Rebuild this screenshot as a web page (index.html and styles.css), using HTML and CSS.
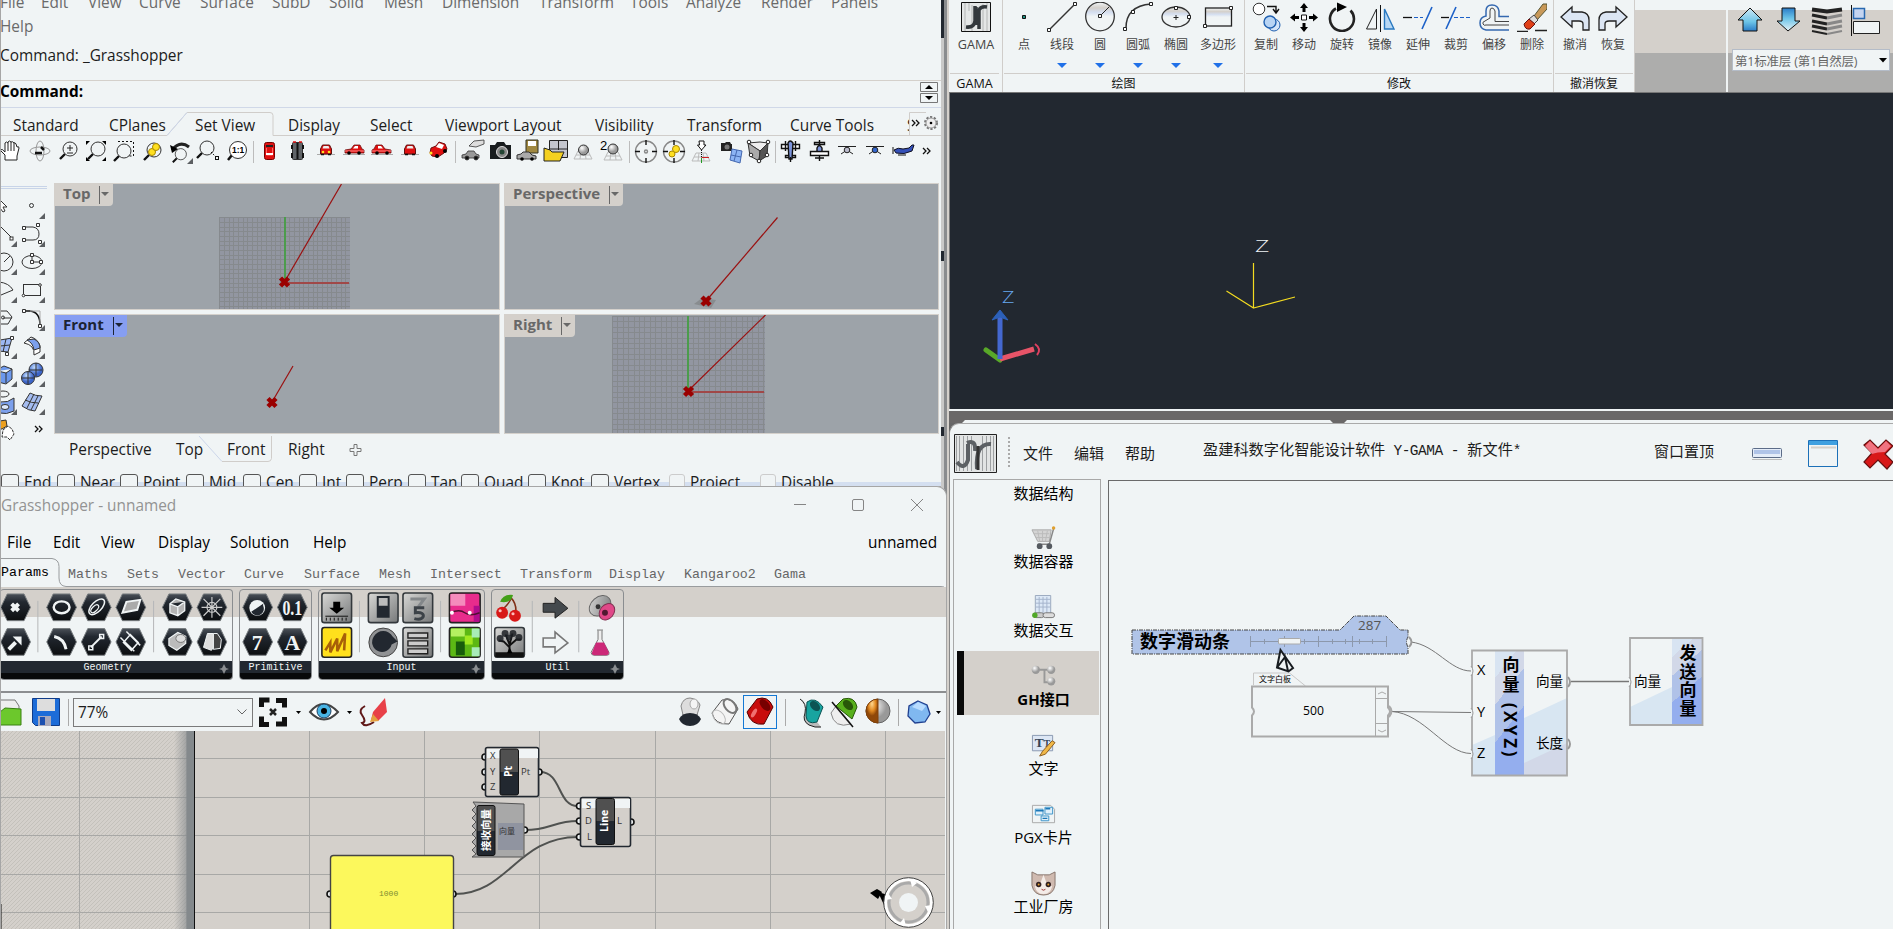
FILE: index.html
```html
<!DOCTYPE html>
<html lang="zh-CN">
<head>
<meta charset="utf-8">
<title>Rhino, Grasshopper and Y-GAMA</title>
<link rel="stylesheet" href="styles.css">
</head>
<body>
<svg width="0" height="0" class="defs">
  <defs>
    <linearGradient id="dark" x2="0" y2="1"><stop offset="0" stop-color="#4a5058"/><stop offset=".3" stop-color="#222830"/><stop offset="1" stop-color="#0c0e10"/></linearGradient>
    <linearGradient id="metal" x2="1" y2="1"><stop offset="0" stop-color="#d8d8d6"/><stop offset="1" stop-color="#77797a"/></linearGradient>
    <linearGradient id="cap" x2="0" y2="1"><stop offset=".5" stop-color="#505050"/><stop offset=".5" stop-color="#222830"/></linearGradient>
    <linearGradient id="sky" x2="0" y2="1"><stop offset="0" stop-color="#f0f4f5"/><stop offset=".2" stop-color="#d4d0cb"/><stop offset=".35" stop-color="#d4def0"/><stop offset=".5" stop-color="#f0f4f5"/></linearGradient>
    <linearGradient id="up" x2="0" y2="1"><stop offset="0" stop-color="#d0e8f4"/><stop offset=".6" stop-color="#6cc4e8"/><stop offset="1" stop-color="#2a7cc8"/></linearGradient>
    <linearGradient id="down" x2="0" y2="1"><stop offset="0" stop-color="#2a7cc8"/><stop offset=".45" stop-color="#6cc4e8"/><stop offset="1" stop-color="#e4f0f6"/></linearGradient>
    <radialGradient id="ball" cx=".35" cy=".3"><stop offset="0" stop-color="#fff"/><stop offset="1" stop-color="#999"/></radialGradient>
    <radialGradient id="blueball" cx=".4" cy=".3"><stop offset="0" stop-color="#c0dcff"/><stop offset="1" stop-color="#3c64c8"/></radialGradient>
    <radialGradient id="amber" cx=".5" cy=".2"><stop offset="0" stop-color="#ffd890"/><stop offset=".6" stop-color="#e08820"/><stop offset="1" stop-color="#904808"/></radialGradient>
    <pattern id="gridTop" x="219" y="217" width="14" height="14" patternUnits="userSpaceOnUse"><rect width="14" height="14" fill="#9296a1"/><path d="M0 .5h14M0 5.500h14M0 10.500h14M.5 0v14M5.500 0v14M10.500 0v14" stroke="#868a8e"/></pattern>
    <pattern id="gridRight" x="612" y="316" width="27" height="27" patternUnits="userSpaceOnUse"><rect width="27" height="27" fill="#9296a1"/><path d="M0 .5h27M0 5.500h27M0 11.500h27M0 16.500h27M0 22.500h27M.5 0v27M5.500 0v27M11.500 0v27M16.500 0v27M22.500 0v27" stroke="#868a8e"/></pattern>
    <pattern id="hatch" width="4" height="4" patternUnits="userSpaceOnUse"><path d="M-1 1l2-2M0 4L4 0M3 5l2-2" stroke="#c4c1bb" stroke-width="1"/></pattern>
    <linearGradient id="edge"><stop offset="0" stop-color="#84898c" stop-opacity="0"/><stop offset=".6" stop-color="#84898c" stop-opacity=".6"/><stop offset=".64" stop-color="#84898c"/><stop offset="1" stop-color="#84898c"/></linearGradient>
    <path id="x" d="M-4-4L4 4M4-4L-4 4" stroke="#9a0000" stroke-width="4.500"/>
    <path id="hex" d="M-15 0L-8.500-13.500H8.500L15 0L8.500 13.500H-8.500Z" fill="url(#dark)" stroke="#777c80"/>
    <rect id="sq" x="-15" y="-15" width="30" height="30" rx="2.500" fill="url(#metal)" stroke="#33383c" stroke-width="1.600"/>
    <path id="corner" d="M6 0V6H0Z" fill="#5c5f62"/>
    <g id="lens" fill="#f0f4f5" stroke="#333"><path d="M-4 4L-9 9" stroke="#111" stroke-width="2.400"/><circle cx="1" cy="-1" r="7"/></g>
    <g id="car"><path d="M-11 4.500H11" stroke="#aaa"/><path d="M-9 3V0l6-1 3-4h6l2 4 2 1V3Z" fill="#e01010" stroke="#701010" stroke-width=".8"/><path d="M-1-1.500l2-2.500h3v2.500Z" fill="#fff"/><path d="M-9 1h19" stroke="#f88"/><circle cx="-5" cy="3" r="1.800"/><circle cx="5" cy="3" r="1.800"/></g>
    <g id="carfront"><path d="M-9 4.500H9" stroke="#aaa"/><path d="M-5.500 4v-5l2-4h7l2 4v5Z" fill="#e01010" stroke="#601010"/><path d="M-3.500-1.500l1-2.500h5l1 2.500Z" fill="#eee"/><path d="M-5 4.500h3M2 4.500h3" stroke="#111" stroke-width="1.500"/></g>
    <g id="net"><path d="M-9 8L-5 0H5L9 8ZM-7 4H7M-3 8L-2 0M3 8L2 0" fill="none" stroke="#bbb"/></g>
    <path id="caret" d="M0 0h5L2.500 3Z"/>
    <path id="plusmark" d="M0-5L2-1 5 0 2 1 0 5-2 1-5 0-2-1Z" fill="#8a8d90"/>
    <circle id="port" r="3" fill="#f0f4f5" stroke="#111" stroke-width="1.600"/>
  </defs>
</svg>

<main class="desktop">

<svg class="behind" viewBox="941 0 952 929"><path d="M941 0h3v38h-3ZM941 251h3v10h-3ZM941 427h3v9h-3Z" fill="#222830"/><path d="M949 411h944v9H949Z" fill="#6a6868"/><path d="M949 420h944v3H949Z" fill="#f0f4f5"/><path d="M949 420h16l-3 3h-13ZM1330 420h17l-3 3h-11Z" fill="#6a6868"/></svg>

<section class="window rhino">
  <nav class="rhino-menu"><span>File</span><span>Edit</span><span>View</span><span>Curve</span><span>Surface</span><span>SubD</span><span>Solid</span><span>Mesh</span><span>Dimension</span><span>Transform</span><span>Tools</span><span>Analyze</span><span>Render</span><span>Panels</span></nav>
  <div class="rhino-help">Help</div>
  <div class="history">Command: _Grasshopper</div>
  <div class="prompt"><b>Command:</b><svg class="spin" viewBox="0 0 18 22"><path d="M.5.500h17v9H.5zM.5 11.500h17v9H.5z" fill="none" stroke="#777"/><path d="M5 7h8L9 3ZM5 14h8L9 18Z"/></svg></div>
  <div class="rhino-tabs">
    <svg class="tab-shape" viewBox="0 108 941 28"><path d="M0 135.500H167L187 112.500H270q3 0 3 3V135.500H941M909.500 135V112.500H926" fill="none" stroke="#d0cdca"/><path d="M167 135.500L187 112.500" stroke="#ccd6ea"/></svg>
    <span>Standard</span><span>CPlanes</span><span>Set View</span><span>Display</span><span>Select</span><span>Viewport Layout</span><span>Visibility</span><span>Transform</span><span>Curve Tools</span><span class="cut">S</span>
    <svg class="more" viewBox="0 0 30 24"><path d="M3 9l3 3-3 3M7 9l3 3-3 3" fill="none" stroke="#111" stroke-width="1.300"/><circle cx="22" cy="12" r="6" fill="none" stroke="#777" stroke-width="2" stroke-dasharray="2.200 1.600"/><circle cx="22" cy="12" r="5" fill="#eee" stroke="#999"/><circle cx="22" cy="12" r="1.300"/></svg>
  </div>
  <svg class="rhino-icons" viewBox="0 136 941 47">
    <path d="M5 160V155L0 150q2-2 5 2V143q1.500-2 3 0v-1q1.500-2 3 0 1.500-1 3 1 1-1 2 1l1 3q2-1 2 1l-2 8v4Z" fill="#fff" stroke="#222"/><path d="M8 143v8M11 142v9M14 143v8" stroke="#222"/>
    <g fill="none" stroke="#999"><ellipse cx="40" cy="151" rx="10" ry="4"/><ellipse cx="40" cy="151" rx="4" ry="10"/><path d="M35 153h7M41 147l3 3" stroke="#111" stroke-width="2.500"/></g>
    <use href="#lens" x="69" y="150"/><path d="M67 148h6M70 145v6M67 153h6" stroke="#222"/>
    <use href="#lens" x="97" y="150"/><path d="M86 141h4l-4 4ZM106 141h-4l4 4ZM86 161h4l-4-4ZM106 161h-4l4-4Z"/>
    <use href="#lens" x="123" y="152"/><path d="M118 141.500H133.500V156H128" fill="none" stroke="#111" stroke-dasharray="2 2"/>
    <use href="#lens" x="153" y="151"/><circle cx="152" cy="152" r="3.500" fill="#ffe020" stroke="#a80"/><circle cx="156" cy="147" r="3.500" fill="#ffe020" stroke="#a80"/>
    <use href="#lens" x="180" y="155" transform="translate(36 31) scale(.8)"/><path d="M172 150q8-10 17-3" fill="none" stroke="#222" stroke-width="3"/><path d="M170 145l2 8 6-4Z"/><use href="#corner" x="187" y="158"/>
    <use href="#lens" x="206" y="149"/><path d="M211 152l4 4" stroke="#111" stroke-dasharray="1.500 1.500"/><rect x="215.500" y="156.500" width="3" height="3" fill="none" stroke="#111"/>
    <g transform="translate(236 151)"><path d="M-4 4L-8 9" stroke="#111" stroke-width="2.500"/><circle cx="2" cy="-1" r="8.500" fill="#fff" stroke="#333"/><text x="-4" y="2" class="tiny">1:1</text></g>
    <path d="M253.500 141v22M455.500 141v22M629.500 141v22M775.500 141v22" stroke="#bcbcbc"/>
    <rect x="264.500" y="142.500" width="10" height="17" rx="2" fill="#e01010" stroke="#700"/><rect x="266" y="145" width="7" height="2" fill="#222"/><path d="M266.500 148v7h6v-7" fill="none" stroke="#f66"/><rect x="266" y="153" width="7" height="2" fill="#fff"/>
    <rect x="292.500" y="142.500" width="10" height="17" rx="1" fill="#606468" stroke="#333"/><path d="M297.500 143v16M292 145v4M303 145v4M292 153v5M303 153v5" stroke="#111" stroke-width="2"/><path d="M293 142h3M299 142h3" stroke="#e01010" stroke-width="1.500"/>
    <use href="#carfront" x="326" y="150"/><circle cx="323" cy="152" r="1.300" fill="#ffe020"/><circle cx="329" cy="152" r="1.300" fill="#ffe020"/><use href="#car" x="354" y="150"/><use href="#car" transform="translate(382 150) scale(-1 1)"/><use href="#carfront" x="410" y="150"/>
    <path d="M430 153l1-5 5-2 3-4 6 2 2 5-3 4-6 4-6-1Z" fill="#e01010" stroke="#701010"/><path d="M436 147l3-4 5 2-2 4Z" fill="#fff"/><circle cx="437" cy="156" r="2"/><circle cx="445" cy="151" r="2"/><circle cx="431" cy="153" r="1.500" fill="#ffe020"/>
    <g fill="#999" stroke="#333" stroke-width=".8"><path d="M462 158v-3l4-1 2-3h6l2 3 3 1v3Z"/><circle cx="467" cy="158" r="2" fill="#111"/><circle cx="476" cy="158" r="2" fill="#111"/><path d="M469 146l5-5 10-1v4l-8 3Z" fill="#ddd"/></g>
    <path d="M490 145h5l2-3h7l2 3h5v14h-21Z" fill="#181c1e"/><circle cx="502" cy="152" r="5.500" fill="#888" stroke="#ddd"/><circle cx="502" cy="152" r="2.500" fill="#243"/>
    <path d="M526 140h12v13h-12Z" fill="#a08840" stroke="#332"/><path d="M528 141h8v5h-8Z" fill="#fff"/><path d="M517 159v-4l4-1 2-2h6l3 3 4 1v3Z" fill="#aaa" stroke="#333"/><circle cx="522" cy="159" r="1.800"/><circle cx="532" cy="159" r="1.800"/>
    <path d="M549.500 140.500h18v17h-18ZM558.500 140v10M550 149h17" fill="#c4c6ce" stroke="#222"/><path d="M544 161V148l6 2 2 2h12l-4 9Z" fill="#f4d020" stroke="#222"/>
    <use href="#net" x="583" y="151"/><circle cx="583.500" cy="150" r="5" fill="url(#ball)" stroke="#333"/>
    <use href="#net" x="613" y="152"/><circle cx="613" cy="149" r="5" fill="url(#ball)" stroke="#333"/><text x="600" y="150" class="two">2</text>
    <g fill="none" stroke="#888" stroke-width="1.400"><circle cx="646" cy="151.500" r="10.500"/><circle cx="674" cy="151.500" r="10.500"/><path d="M646 140v5M646 158v5M635 151.500h5M652 151.500h5M674 140v5M674 158v5M663 151.500h5M680 151.500h5" stroke="#111"/><circle cx="646" cy="151.500" r="1.500"/></g><circle cx="672" cy="154" r="3" fill="#ffe020" stroke="#a80"/><circle cx="676" cy="149" r="3.500" fill="#ffe020" stroke="#a80"/>
    <use href="#net" x="701" y="153"/><path d="M699 141h5v4h2l-4.500 5-4-5h2Z" fill="#fff" stroke="#111"/><path d="M701.500 150v8" stroke="#111" stroke-dasharray="1 1"/><path d="M701.500 157.500H709" stroke="#c22"/><path d="M701.500 158v5" stroke="#292"/>
    <path d="M721 143h4l1-1h4l1 2h1v7h-11Z" fill="#222"/><circle cx="727" cy="147" r="2.500" fill="#777"/><path d="M732 149l10 2-2 12-10-3ZM737 150l-3 11M731 155l10 2" fill="#8cb4f4" stroke="#4468b0"/>
    <path d="M748 143l12-1 8 1-8 8Z" fill="#eee" stroke="#333"/><path d="M748 143l2 13 9 5 1-10Z" fill="#aaa" stroke="#333"/><path d="M760 151l8-8-1 13-8 5Z" fill="#555" stroke="#333"/><g fill="#fff" stroke="#222"><circle cx="749" cy="142" r="1.800"/><circle cx="768" cy="142" r="1.800"/><circle cx="751" cy="155" r="1.800"/><circle cx="759" cy="161" r="1.800"/><circle cx="767" cy="155" r="1.800"/></g>
    <g stroke="#111" stroke-width="1.400" fill="#fff"><path d="M781.500 144.500h18v4h-18ZM785.500 155.500h10v2h-10Z"/><path d="M788 143q2-4 5 0l-1 16h-3Z" fill="#7c94dc"/><path d="M785.500 141v10M795.500 141v10M790.500 157v5"/><path d="M814.500 142.500h10v2h-10Z"/><path d="M817 148q2-5 5 0v5h-5Z" fill="#7c94dc"/><path d="M810.500 151.500h18v4h-18Z"/><path d="M819.500 140v6M815 158h9M819.500 156v5"/></g>
    <g stroke="#222"><path d="M838 146.500h18M841 154l6-4 6 4M847 146v4M866 146.500h18M869 154l6-4 6 4M875 146v4" fill="none"/><circle cx="847" cy="150" r="2.800" fill="#bbc"/><circle cx="875" cy="150" r="2.800" fill="#36c"/></g>
    <path d="M894 150q4-3 9-1l6-1 3-3h2l-2 6q-8 4-16 2Z" fill="#3450b8" stroke="#112"/><path d="M893 147v7M898 155h8" stroke="#111"/>
    <path d="M923 148l3 3-3 3M927 148l3 3-3 3" fill="none" stroke="#111" stroke-width="1.300"/>
  </svg>
  <div class="rhino-body">
    <svg class="side-tools" viewBox="0 183 54 257">
      <path d="M1 186.500H47M1 188.500H47" stroke="#c8d4e8"/>
      <g fill="none" stroke="#333">
        <path d="M-3 197l10 10-4 0 2 4-2 1-3-4" fill="#fff"/><circle cx="31.500" cy="205.500" r="2"/>
        <path d="M1 227l11 11"/><rect x="10" y="237" width="3" height="3" fill="#fff"/><path d="M24 227h9q6 1 6 7 0 6-6 6h-9"/><path d="M22.500 226.500h3v3h-3ZM36.500 223.500h3v3h-3ZM22.500 238.500h3v3h-3ZM38.500 240.500h3v3h-3Z" fill="#fff"/>
        <circle cx="4" cy="262" r="9"/><path d="M4 262l6-6"/><ellipse cx="32" cy="262" rx="10" ry="6.500"/><path d="M30.500 253.500h3v3h-3ZM30.500 260.500h3v3h-3ZM39.500 260.500h3v3h-3ZM32 256v5M34 262h5" fill="#fff"/>
        <path d="M-1 282q10 1 14 8l-12 5"/><rect x="23.500" y="284.500" width="17" height="11"/><circle cx="40" cy="285" r="1.300" fill="#fff"/><circle cx="23.500" cy="295.500" r="1.300" fill="#fff"/>
        <path d="M-2 311l9 0 5 6-4 7h-10M3 318h9"/><circle cx="3" cy="317.500" r="1.500"/><path d="M24 311h6q10 1 10 14" stroke="#111" stroke-width="1.600"/><path d="M30 311h10v14" stroke="#aaa"/><path d="M22.500 309.500h3v3h-3ZM38.500 324.500h3v3h-3Z" fill="#fff"/>
        <path d="M0 340l12-2-4 14-9-1ZM6 339l-3 13M0 346l10-1" fill="#9cb8f4"/><path d="M10.500 336.500h3v3h-3ZM5.500 352.500h3v3h-3Z" fill="#fff"/>
        <path d="M24 343l7-6q7 2 9 9v6l-6 3q1-10-10-12Z" fill="#fff"/><path d="M27 340l7-1q6 3 6 9l-6 2q-1-7-7-10" fill="#7ca0ec"/>
        <path d="M-2 369l6-3 8 3v10l-6 5-8-2ZM-2 371l8 2 6-4M6 373v10" fill="#6c98ec"/>
        <circle cx="36" cy="370" r="7" fill="url(#blueball)"/><circle cx="28" cy="378" r="6.500" fill="url(#blueball)"/><path d="M29 370h13M36 363v13M22 378h12M28 372v12"/>
        <ellipse cx="3" cy="394" rx="6" ry="3"/><path d="M0 402q8 1 14-4v13q-8 4-14 2Z" fill="#7ca0ec"/><ellipse cx="5" cy="407" rx="4" ry="2.500" fill="#dde8fc"/>
        <path d="M22 406l8-13q5 3 12 3l-7 15q-6 0-13-5ZM25 400q6 3 13 3M34 394l-7 14M38 396l-7 14" fill="#a4bcf0"/>
        <path d="M0 421l6-1 1 6-5 3h-2Z" fill="#eca020"/><path d="M3 430l5-4 4 3 2 5-4 6-3-3-5 0Z" fill="#fff" stroke-dasharray="3 1"/>
      </g>
      <path d="M35 426l3 3-3 3M39 426l3 3-3 3" fill="none" stroke="#111" stroke-width="1.300"/>
      <g><use href="#corner" x="39" y="213"/><use href="#corner" x="11" y="241"/><use href="#corner" x="39" y="241"/><use href="#corner" x="11" y="269"/><use href="#corner" x="39" y="269"/><use href="#corner" x="11" y="297"/><use href="#corner" x="39" y="297"/><use href="#corner" x="11" y="325"/><use href="#corner" x="39" y="325"/><use href="#corner" x="11" y="353"/><use href="#corner" x="39" y="353"/><use href="#corner" x="11" y="381"/><use href="#corner" x="39" y="381"/><use href="#corner" x="11" y="409"/><use href="#corner" x="39" y="409"/></g>
    </svg>
    <div class="viewports">
      <div class="viewport"><svg viewBox="55 184 444 125"><rect x="219" y="217" width="131" height="95" fill="url(#gridTop)"/><path d="M285 217v64" stroke="#4c9c4c" stroke-width="2"/><path d="M288 283h61" stroke="#a04848" stroke-width="2"/><path d="M285 281L341.500 184" stroke="#9a1010" stroke-width="1.200"/><use href="#x" x="284.500" y="282"/></svg><div class="vp-label">Top<i></i></div></div>
      <div class="viewport"><svg viewBox="505 184 433 125"><path d="M694 304l8-6 14 2-5 8Z" fill="#888c8f"/><path d="M706 301L777.500 217.500" stroke="#9a1010" stroke-width="1.200"/><use href="#x" x="706" y="301"/></svg><div class="vp-label">Perspective<i></i></div></div>
      <div class="viewport"><svg viewBox="55 315 444 118"><path d="M272 402L293 366" stroke="#9a1010" stroke-width="1.200"/><use href="#x" x="272" y="402.500"/></svg><div class="vp-label active">Front<i></i></div></div>
      <div class="viewport"><svg viewBox="505 315 433 118"><rect x="612" y="316" width="153" height="120" fill="url(#gridRight)"/><path d="M688 316v74" stroke="#4c9c4c" stroke-width="2"/><path d="M692 392h72" stroke="#a04848" stroke-width="2"/><path d="M688 391L765.500 315" stroke="#9a1010" stroke-width="1.200"/><use href="#x" x="688.500" y="391.500"/></svg><div class="vp-label">Right<i></i></div></div>
    </div>
  </div>
  <div class="view-tabs">
    <svg class="tab-shape" viewBox="0 434 941 36"><path d="M199 436L222 461.500" stroke="#ccd6ea"/><path d="M222 461.500H268q3 0 3.500-3V436" fill="none" stroke="#d0cdca"/><path d="M354 444.500h3v4h4v3h-4v4h-3v-4h-4v-3h4Z" fill="none" stroke="#777"/></svg>
    <span>Perspective</span><span>Top</span><span>Front</span><span>Right</span>
  </div>
  <div class="osnaps"><span>End</span><span>Near</span><span>Point</span><span>Mid</span><span>Cen</span><span>Int</span><span>Perp</span><span>Tan</span><span>Quad</span><span>Knot</span><span>Vertex</span><span class="off">Project</span><span class="off">Disable</span></div>
</section>

<section class="window hopper">
  <header class="gh-title"><span>Grasshopper - unnamed</span><svg viewBox="790 496 140 20"><path d="M794 504.500h12M852.500 501q0-1.500 1.500-1.500h8q1.500 0 1.500 1.500v8q0 1.500-1.500 1.500h-8q-1.500 0-1.500-1.500ZM911 499l12 12M923 499l-12 12" fill="none" stroke="#858585"/></svg></header>
  <nav class="gh-menu"><span>File</span><span>Edit</span><span>View</span><span>Display</span><span>Solution</span><span>Help</span><span>unnamed</span></nav>
  <div class="gh-tabs">
    <svg class="tab-shape" viewBox="0 557 946 30"><path d="M1 558.500H52q7 1 7 8V578q0 8 7 8.500H941q4 0 4 2" fill="none" stroke="#999c9e"/></svg>
    <span class="on">Params</span><span>Maths</span><span>Sets</span><span>Vector</span><span>Curve</span><span>Surface</span><span>Mesh</span><span>Intersect</span><span>Transform</span><span>Display</span><span>Kangaroo2</span><span>Gama</span>
  </div>
  <div class="gh-ribbon">
    <div class="group"><svg viewBox="0.500 590 232 72">
      <path d="M37.500 601v52M154.500 601v52" stroke="#b4b6b8"/>
      <g><use href="#hex" x="15" y="607.500"/><use href="#hex" x="61.500" y="607.500"/><use href="#hex" x="96.500" y="607.500"/><use href="#hex" x="131.500" y="607.500"/><use href="#hex" x="178.500" y="607.500"/><use href="#hex" x="213.500" y="607.500"/><use href="#hex" x="15" y="642.500"/><use href="#hex" x="61.500" y="642.500"/><use href="#hex" x="96.500" y="642.500"/><use href="#hex" x="131.500" y="642.500"/><use href="#hex" x="178.500" y="642.500"/><use href="#hex" x="213.500" y="642.500"/></g>
      <g fill="none" stroke="#f0f4f5" stroke-width="2.500"><path d="M11 604l7 7M18 604l-7 7" stroke-width="4"/><ellipse cx="61.500" cy="607.500" rx="8" ry="6"/><ellipse cx="97" cy="607" rx="10" ry="5" transform="rotate(-45 97 607)" stroke-width="1.500"/><ellipse cx="95" cy="609" rx="5" ry="2.500" transform="rotate(-45 95 609)" stroke-width="1.200"/><path d="M123 613l4-11 14-2-3 10Z" fill="#aaa" stroke-width="2"/><path d="M171 604l6-5 9 3v9l-7 5-8-3ZM171 604l8 3 7-5M179 607v9" fill="#b4b4b4" stroke-width="1.300"/><path d="M205 599l17 17M222 599l-17 17M213.500 597v21M203 607.500h21" stroke-width="1.200" stroke="#ccc"/><circle cx="213.500" cy="607.500" r="5" stroke-width="1.200" stroke="#ccc"/>
      <path d="M8 650l7-7" stroke-width="4"/><path d="M12 637h9v9Z" fill="#f0f4f5" stroke="none"/><path d="M54 637q10 2 12 13" stroke-width="3"/><path d="M91 648l11-11" stroke-width="2"/><path d="M89 646.500h4v4h-4ZM100 635h4v4h-4Z" stroke-width="1.500"/><path d="M124 643l7-8 8 8-7 8ZM121 638l14 14M127 632l14 14" stroke-width="1.500"/><path d="M170 646v-7l9-6 8 4v7l-9 7Z" fill="#bbb" stroke-width="1.200"/><ellipse cx="182" cy="639" rx="5" ry="4" fill="#ddd" stroke="#777" stroke-width="1"/><path d="M205 648l4-14h6v14l-2 3Z" fill="#ddd" stroke-width="1"/><path d="M215 634h4l4 6-1 9-7 1Z" fill="#444" stroke-width="1"/></g>
    </svg><footer>Geometry<svg viewBox="-6 -6 12 12"><use href="#plusmark"/></svg></footer></div>
    <div class="group"><svg viewBox="240 590 71 72"><use href="#hex" x="257.500" y="607.500"/><use href="#hex" x="292.500" y="607.500"/><use href="#hex" x="257.500" y="642.500"/><use href="#hex" x="292.500" y="642.500"/><circle cx="257" cy="608" r="8" fill="#f0f4f5"/><path d="M251 612L263 604V606a6 6 0 0 1-12 6" fill="#222830"/><g class="glyph"><text x="292.500" y="615" textLength="20" lengthAdjust="spacingAndGlyphs">0.1</text><text x="257" y="651">7</text><text x="292.500" y="651">A</text></g></svg><footer>Primitive</footer></div>
    <div class="group"><svg viewBox="319.500 590 165 72">
      <path d="M359.500 601v52M441.500 601v52" stroke="#b4b6b8"/>
      <use href="#sq" x="336.500" y="608"/><use href="#sq" x="383.500" y="608"/><use href="#sq" x="418.500" y="608"/><use href="#sq" x="418.500" y="643"/>
      <path d="M333 602h7v6h4l-7.500 6-7.500-6h4Z"/><path d="M325 616.500h23M326 618v3M330 618v3M334 618v3M338 618v3M342 618v3M346 618v3" stroke="#111"/>
      <path d="M377 596h13v22h-13Z" fill="#222830"/><path d="M379 598h9v8h-9Z" fill="#bbb"/><path d="M411 599h14l-6 8" fill="none" stroke="#83878a" stroke-width="3"/><path d="M425 608h-9v5q9-1 8 4-2 4-9 2" fill="none" stroke="#3c4248" stroke-width="3"/>
      <rect x="321.500" y="628" width="30" height="30" rx="2.500" fill="#ffe01c" stroke="#222" stroke-width="1.600"/><path d="M325 651l5-8v10l7-14v13l8-18-1 17" fill="none" stroke="#a86008" stroke-width="2.600"/>
      <circle cx="383.500" cy="643" r="14.500" fill="#909294" stroke="#444"/><path d="M374 637a11 11 0 0 1 19 0l5 5-6 3a10 10 0 1 1-18-8" fill="#222830"/>
      <g fill="#ccc" stroke="#222" stroke-width="1.400"><path d="M408.500 633.500h20v5h-20ZM408.500 641.500h20v5h-20ZM408.500 649.500h20v5h-20Z"/></g>
      <rect x="450.500" y="593" width="31" height="30" rx="2.500" fill="#e82c8c" stroke="#222" stroke-width="1.600"/><path d="M451.500 594h15v12h-15Z" fill="#f48cbc"/><path d="M475 606h6v16h-6Z" fill="#b00c8c"/><path d="M451 613q10-4 15 0t15 0" fill="none" stroke="#501030" stroke-width="1.500"/><circle cx="453" cy="613" r="2" fill="#fff"/><circle cx="471" cy="613" r="2" fill="#fff"/>
      <rect x="450.500" y="628" width="31" height="30" rx="2.500" fill="#5cb814" stroke="#222" stroke-width="1.600"/><path d="M452 629h14v8h-14Z" fill="#b4f060"/><path d="M457 642h9v14h-9Z" fill="#185c0c"/><path d="M466 636h8v9h-8Z" fill="#a0e820"/><path d="M473 629h8v9h-8ZM473 648h8v9h-8Z" fill="#a8ecb8"/>
    </svg><footer>Input<svg viewBox="-6 -6 12 12"><use href="#plusmark"/></svg></footer></div>
    <div class="group"><svg viewBox="492.500 590 131 72">
      <path d="M532.500 601v52M579.500 601v52" stroke="#b4b6b8"/>
      <path d="M503 609q7-6 8-11 5 5 5 13" fill="none" stroke="#803018" stroke-width="1.600"/><path d="M500 602q3-8 13-7-2 9-13 7" fill="#44a018"/><circle cx="502" cy="613" r="6" fill="#d81818"/><circle cx="515" cy="616" r="6" fill="#d81818"/><circle cx="500" cy="611" r="1.600" fill="#fbb"/><circle cx="513" cy="614" r="1.600" fill="#fbb"/>
      <use href="#sq" x="509.500" y="643"/><path d="M495 653h29v5h-29Z" fill="#111"/><path d="M509.500 655v-10M509.500 648l-6-6-5-1M509.500 646l7-6 5 0M509.500 645l-4-10M509.500 645l3-11" fill="none" stroke="#111" stroke-width="2"/><g fill="#1c2024" fill-opacity=".85"><circle cx="500" cy="639" r="3.500"/><circle cx="505" cy="634" r="3.500"/><circle cx="513" cy="634" r="3.500"/><circle cx="519" cy="638" r="3.500"/><circle cx="509" cy="638" r="3"/></g><path d="M507 654l2.500-6 3 6Z"/>
      <path d="M543.500 603.500h12v-6l13 11-13 10v-6h-12Z" fill="#44494d" stroke="#222"/><path d="M543.500 638.500h12v-6l13 11-13 10v-6h-12Z" fill="#f0f4f5" stroke="#777" stroke-width="1.600"/>
      <ellipse cx="601" cy="606" rx="12" ry="9" transform="rotate(-40 601 606)" fill="url(#metal)" stroke="#666"/><ellipse cx="608" cy="612" rx="9" ry="7" transform="rotate(-50 608 612)" fill="#e04888" stroke="#803050"/><circle cx="606" cy="613" r="3" fill="#501830"/><circle cx="599" cy="607" r="2.500" fill="#333"/>
      <path d="M598 630.500h6M599 631v9l-7 13q0 3 3 3h13q3 0 2-3l-7-13v-9" fill="#eee" stroke="#777"/><path d="M597 643h8l5 10q0 3-3 3h-12q-3-1-2-3Z" fill="#cc2878"/>
    </svg><footer>Util<svg viewBox="-6 -6 12 12"><use href="#plusmark"/></svg></footer></div>
  </div>
  <div class="gh-tools">
    <svg class="t-left" viewBox="1 694 72 37"><path d="M0 700h15l4 6v10h-19Z" fill="#eee" stroke="#777"/><path d="M0 712l5-4 16 1v16H0Z" fill="#6cc82c" stroke="#388010"/><path d="M32.500 698.500h27v27h-24l-3-3Z" fill="#1c6cd8" stroke="#103c88"/><path d="M37 699h18v12H37Z" fill="#ddd"/><path d="M38 716h13v10H38Z" fill="#aab"/><path d="M40 717h5v8h-5Z" fill="#1c50b0"/><path d="M68.500 699v27" stroke="#aaa"/></svg>
    <div class="zoombox">77%<svg viewBox="0 0 10 6"><path d="M.5.500L5 5 9.500.500" fill="none" stroke="#666"/></svg></div>
    <svg class="t-mid" viewBox="253 694 420 37"><path d="M261.500 707v-7h8M276 700.500h8.500v7M284.500 717v7H276M269 724.500h-7.500v-8" fill="none" stroke="#111" stroke-width="5"/><path d="M270 709l6 6M276 709l-6 6" stroke="#222" stroke-width="2.500"/><use href="#caret" x="296" y="711"/><path d="M310 712q13-16 28 0-14 15-28 0Z" fill="#fff" stroke="#444" stroke-width="2"/><circle cx="324" cy="711" r="7" fill="#48b4e4" stroke="#204060"/><circle cx="324" cy="711" r="3"/><use href="#caret" x="347" y="711"/><path d="M365 706q-7 4-3 9 5 7 0 8 3 5 12-1" fill="none" stroke="#601818" stroke-width="2"/><path d="M371 720l2-8 12-14 2 14-9 9Z" fill="#e84048"/><path d="M370 722l3-8 6 7Z" fill="#e4a040"/></svg>
    <svg class="t-right" viewBox="673 694 272 37">
      <path d="M681 706q2-8 9-8 8 1 10 7l-3 10h-14Z" fill="#ddd" stroke="#888"/><ellipse cx="694" cy="704" rx="4" ry="5" fill="#f4f4f4" stroke="#aaa"/><path d="M679 719q3-6 11-6t11 6q-3 7-11 7t-11-7Z" fill="#222830"/>
      <path d="M712 713l10-13q12-3 16 9l-9 15q-14 1-17-11Z" fill="#f4f4f4" stroke="#555"/><ellipse cx="730" cy="706" rx="5" ry="8" transform="rotate(-40 730 706)" fill="none" stroke="#777" stroke-width="2"/><ellipse cx="719" cy="717" rx="5" ry="8" transform="rotate(-40 719 717)" fill="none" stroke="#bbb"/>
      <rect x="743.500" y="695.500" width="33" height="33" fill="#f0f4f5" stroke="#1478d4"/><path d="M747 712l10-13q11-4 16 8l-9 17q-13 2-17-12Z" fill="#c80c0c" stroke="#500"/><ellipse cx="765" cy="705" rx="4" ry="7" transform="rotate(-40 765 705)" fill="#700"/><ellipse cx="754" cy="713" rx="2" ry="5" transform="rotate(30 754 713)" fill="#f07070"/>
      <path d="M785.500 699v27M898.500 699v27" stroke="#aaa"/>
      <path d="M800 699q7 4 5 14-3 8 4 12 6 3 12 2" fill="#bbb" stroke="#222"/><path d="M807 702q8-6 16 5l-6 15q-10 3-11-6Z" fill="#18a4a0" stroke="#0c5454"/><ellipse cx="815" cy="706" rx="4" ry="6" transform="rotate(-45 815 706)" fill="#0c5454"/>
      <path d="M831 713l5-7 15 18q-17 5-20-11Z" fill="#eee" stroke="#888"/><path d="M836 706l7-7q12-3 14 8l-5 12Z" fill="#58b01c" stroke="#285808"/><path d="M832 702l21 25" stroke="#111" stroke-width="1.500"/><ellipse cx="848" cy="705" rx="4" ry="6" transform="rotate(-45 848 705)" fill="#285808"/>
      <circle cx="878" cy="711" r="12" fill="url(#ball)" stroke="#666"/><path d="M878 699a12 12 0 0 0 0 24Z" fill="url(#amber)" stroke="#804008"/>
      <path d="M918 701l9 4 3 9-5 8-10 1-7-7 1-10Z" fill="#80b8f0" stroke="#204090" stroke-width="1.300"/><path d="M912 707l6-5 8 4-4 5Z" fill="#b8dcff"/><use href="#caret" x="936" y="711"/>
    </svg>
  </div>
  <svg class="gh-canvas" viewBox="1 731 944 198">
    <rect x="1" y="731" width="944" height="198" fill="#d4d0cb"/><rect x="1" y="731" width="193" height="198" fill="url(#hatch)"/>
    <path d="M79.500 731v198M309.500 731v198M424.500 731v198M539.500 731v198M655.500 731v198M770.500 731v198M885.500 731v198M1 758.500h944M1 797.500h944M1 835.500h944M1 874.500h944M1 912.500h944" stroke="#a8a8a6"/>
    <rect x="174" y="731" width="20" height="198" fill="url(#edge)"/><path d="M194.500 731v198M1 904v25" stroke="#111"/>
    <g fill="none" stroke="#505250" stroke-width="2"><path d="M540 772c22 0 17 34 38 34M525 830c25 0 29-9 53-9M455 894c53 0 62-57 123-57"/></g>
    <use href="#port" x="485" y="757"/><use href="#port" x="485" y="772"/><use href="#port" x="485" y="787"/><use href="#port" x="539" y="772"/>
    <rect x="485.500" y="747.500" width="53" height="49" rx="2" fill="#d4d0cb" stroke="#222830" stroke-width="1.600"/><path d="M487 749h51v9h-51Z" fill="#f0f4f5"/><rect x="500" y="749" width="18.500" height="46" rx="2" fill="url(#cap)" stroke="#111"/>
    <g class="node-text"><text x="490" y="759">X</text><text x="490" y="775">Y</text><text x="490" y="790">Z</text><text x="521" y="775">Pt</text></g>
    <use href="#port" x="524.500" y="830"/><path d="M524 804v53H472l4-3-4-4 4-4-4-4 4-4-4-4 4-4-4-4 4-4-4-4 4-4-4-4 4-4-3-4Z" fill="#a8a8a8" stroke="#555"/><path d="M498 823h25v27h-25Z" fill="#9094a0"/><rect x="477" y="805.500" width="18" height="50" rx="2" fill="url(#cap)" stroke="#111"/>
    <use href="#port" x="579.500" y="806"/><use href="#port" x="579.500" y="821"/><use href="#port" x="579.500" y="837"/><use href="#port" x="631" y="822"/>
    <rect x="580.500" y="797.500" width="50" height="49" rx="2" fill="#d4d0cb" stroke="#222830" stroke-width="1.600"/><path d="M582 799h48v9h-48Z" fill="#f0f4f5"/><rect x="596" y="798.500" width="18.500" height="46" rx="2" fill="url(#cap)" stroke="#111"/>
    <g class="node-text"><text x="586" y="809">S</text><text x="585" y="824">D</text><text x="587" y="840">L</text><text x="617" y="824">L</text><text x="499" y="834" class="small">向量</text></g>
    <g class="cap-text"><text transform="translate(512 777) rotate(-90)">Pt</text><text transform="translate(608 832) rotate(-90)">Line</text><text transform="translate(490 851) rotate(-90)">接收向量</text></g>
    <use href="#port" x="330" y="894"/><use href="#port" x="453" y="894"/><rect x="330.500" y="855.500" width="123" height="90" rx="3" fill="#fcf85c" stroke="#444" stroke-width="1.400"/><text x="379" y="896" class="panel-text">1000</text>
    <path d="M870 893l7-4 5 3-4 7Z"/><path d="M878 892l10 3-4 10Z"/><circle cx="908.500" cy="902.500" r="23" fill="#d4d0cb" stroke="#fff" stroke-width="3"/><circle cx="908.500" cy="902.500" r="24.800" fill="none" stroke="#444"/><circle cx="908.500" cy="902.500" r="19.500" fill="none" stroke="#aaa" stroke-width="3"/><circle cx="908.500" cy="902.500" r="9.500" fill="#f0f4f5"/><path d="M910 879l7 4-5 4ZM932 905l-4 7-3-6ZM906 926l-6-3 4-5ZM885 900l3-7 4 6Z" fill="#fff"/>
  </svg>
</section>

<section class="window cad">
  <div class="cad-ribbon">
    <div class="panel p1"><div class="tools"><figure><svg viewBox="0 0 30 30"><path d="M.5.500h29v29H.5Z" fill="#e4e6e6" stroke="#111"/><path d="M4 1v28M8 1v8M11 3v26M22 2v27M26 1v28" stroke="#b4b6b6"/><path d="M14 4v15q-1 7-9 6M18 27V8q2-4 8-3M15 5v18" fill="none" stroke="#33383c" stroke-width="3.500"/></svg><figcaption>GAMA</figcaption></figure></div><footer>GAMA</footer></div>
    <div class="panel p2"><div class="tools">
      <figure><svg viewBox="0 0 30 30"><path d="M13.500 13.500h3v3h-3Z" fill="#1c9080" stroke="#111"/></svg><figcaption>点</figcaption></figure>
      <figure class="drop"><svg viewBox="0 0 30 30"><path d="M3 27L27 3" stroke="#333" stroke-width="1.500"/><path d="M.5 26.500h3v3h-3ZM26.500.500h3v3h-3Z" fill="#fff" stroke="#222"/></svg><figcaption>线段</figcaption></figure>
      <figure class="drop"><svg viewBox="0 0 30 30"><circle cx="15" cy="14.500" r="14.300" fill="url(#sky)" stroke="#333" stroke-width="1.300"/><path d="M15 14L24 5" stroke="#222"/><path d="M13.500 12.500h3v3h-3Z" fill="#fff" stroke="#222"/></svg><figcaption>圆</figcaption></figure>
      <figure class="drop"><svg viewBox="0 0 30 30"><path d="M3 26Q3 4 28 2" fill="none" stroke="#333" stroke-width="1.500"/><path d="M.5 25.500h3v3h-3ZM26.500.500h3v3h-3ZM8.500 8.500h3v3h-3Z" fill="#fff" stroke="#222"/></svg><figcaption>圆弧</figcaption></figure>
      <figure class="drop"><svg viewBox="0 0 30 30"><ellipse cx="15" cy="15" rx="14" ry="10" fill="url(#sky)" stroke="#333" stroke-width="1.300"/><path d="M15 13v5M12.500 15.500h5" stroke="#222"/><path d="M13.500 4.500h3v3h-3ZM26.500 13.500h3v3h-3Z" fill="#fff" stroke="#222"/></svg><figcaption>椭圆</figcaption></figure>
      <figure class="drop"><svg viewBox="0 0 30 30"><rect x="2.500" y="6" width="26" height="18" fill="url(#sky)" stroke="#222" stroke-width="1.300"/><path d="M.5 22.500h3v3h-3ZM26.500 4.500h3v3h-3Z" fill="#fff" stroke="#222"/></svg><figcaption>多边形</figcaption></figure>
    </div><footer>绘图</footer></div>
    <div class="panel p3"><div class="tools">
      <figure><svg viewBox="0 0 30 30"><circle cx="8" cy="7" r="5.800" fill="#fff" stroke="#333"/><path d="M16 4.500h9v6M22 7l3 4 3-4" fill="none" stroke="#111" stroke-width="1.400"/><circle cx="23" cy="23" r="6" fill="#d4e4f8" stroke="#2060b0"/><circle cx="19" cy="20" r="6" fill="#b8d4f4" stroke="#2060b0" stroke-width="1.400"/></svg><figcaption>复制</figcaption></figure>
      <figure><svg viewBox="0 0 30 30"><path d="M12.500 13h5v5h-5Z" fill="#fff" stroke="#111"/><path d="M15 1l4 5h-2.500v4h-3V6H11ZM15 30l4-5h-2.500v-4h-3v4H11ZM1 15.500l5-4v2.500h4v3H6v2.500ZM29 15.500l-5-4v2.500h-4v3h4v2.500Z"/></svg><figcaption>移动</figcaption></figure>
      <figure><svg viewBox="0 0 30 30"><path d="M9 6.500a12 12 0 1 0 14.500 2" fill="none" stroke="#222" stroke-width="2.600"/><path d="M10 .5l10 4.500-10 5Z"/></svg><figcaption>旋转</figcaption></figure>
      <figure><svg viewBox="0 0 30 30"><path d="M11.500 7v20h-10Z" fill="none" stroke="#222"/><path d="M15.500 3v27" stroke="#111"/><path d="M19.500 7v20h9.500Z" fill="#b8d8f4" stroke="#2878c0" stroke-width="1.400"/></svg><figcaption>镜像</figcaption></figure>
      <figure><svg viewBox="0 0 30 30"><path d="M0 15.500h9" stroke="#111" stroke-width="1.300"/><path d="M11 15.500h9" stroke="#1c60c8" stroke-dasharray="4 2"/><path d="M19 27L29 5" stroke="#1c60c8" stroke-width="1.600"/></svg><figcaption>延伸</figcaption></figure>
      <figure><svg viewBox="0 0 30 30"><path d="M0 15.500h8" stroke="#111" stroke-width="1.300"/><path d="M13 15.500h17" stroke="#1c60c8" stroke-dasharray="4 2"/><path d="M5 27L15 5" stroke="#1c60c8" stroke-width="1.600"/></svg><figcaption>裁剪</figcaption></figure>
      <figure><svg viewBox="0 0 30 30"><path d="M30 14.500H20V9q-1-6-7-6t-6 6v5q-6 1-6 7t6 7h23" fill="none" stroke="#3468b0" stroke-width="1.500"/><path d="M30 19.500H16V9q-1-3-3-3t-2 3v7l-5 3q-3 1-2 3 1 2 3 1h23" fill="none" stroke="#444"/></svg><figcaption>偏移</figcaption></figure>
      <figure><svg viewBox="0 0 30 30"><path d="M17 14L26 2h4v5L20 18Z" fill="#c89858" stroke="#553"/><path d="M12 17l5-4 4 5-4 4Z" fill="#ddd" stroke="#444"/><path d="M7 22l5-5 6 5-5 5q-5 1-6-5Z" fill="#e04018" stroke="#611"/><path d="M0 29.500h11M18 28.500h12" stroke="#222" stroke-width="1.600"/></svg><figcaption>删除</figcaption></figure>
    </div><footer>修改</footer></div>
    <div class="panel p4"><div class="tools">
      <figure><svg viewBox="0 0 30 30"><path d="M1 15L12 5v5h10q7 1 7 8v10h-6v-6q0-3-4-3h-7v6Z" fill="#dce6f4" stroke="#222" stroke-width="1.300"/></svg><figcaption>撤消</figcaption></figure>
      <figure><svg viewBox="0 0 30 30"><path d="M29 15L18 5v5H8q-7 1-7 8v10h6v-6q0-3 4-3h7v6Z" fill="#dce6f4" stroke="#222" stroke-width="1.300"/></svg><figcaption>恢复</figcaption></figure>
    </div><footer>撤消恢复</footer></div>
    <div class="panel blank"></div>
    <div class="panel p5">
      <svg viewBox="1736 0 150 48"><path d="M1750 8l12 12h-5v11h-14V20h-5Z" fill="url(#up)" stroke="#111"/><path d="M1788 31l12-10h-5V8h-13v13h-5Z" fill="url(#down)" stroke="#111"/><g fill="none" stroke-width="3"><path d="M1812 9.500l15 2 15-2" stroke="#222" stroke-width="4"/><path d="M1812 15l15 3M1812 21l15 3M1812 26l15 3" stroke="#222"/><path d="M1827 18l15-3M1827 24l15-3M1827 29l15-3" stroke="#888"/><path d="M1812 31l15 3" stroke="#222" stroke-width="2"/><path d="M1827 34l15-3" stroke="#888" stroke-width="2"/></g><path d="M1851.500 5v31" stroke="#111"/><path d="M1853.500 8.500h11v10h-11Z" fill="#c4d4f0" stroke="#2868b0" stroke-width="1.500"/><path d="M1853.500 21.500h26v12h-26Z" fill="#f0f4f5" stroke="#222"/></svg>
      <div class="level">第1标准层 (第1自然层)<svg viewBox="0 0 8 5"><path d="M0 0h8L4 4.500Z"/></svg></div>
    </div>
  </div>
  <svg class="cad-view" viewBox="949 92 944 317">
    <path d="M949 92h944v317H949Z" fill="#222830"/><path d="M949.500 93v316M949 92.500h944" stroke="#777"/>
    <path d="M1253.500 263v45l41.500-11M1253.500 308l-27-17" fill="none" stroke="#f4dc20" stroke-width="1.200"/>
    <path d="M1000 360l-14-10" stroke="#58a828" stroke-width="5" stroke-linecap="round"/><path d="M1000 359l34-10" stroke="#e85468" stroke-width="5"/><path d="M1035 344q7 5 2 11" fill="none" stroke="#e04060" stroke-width="2"/><path d="M1000 359v-43" stroke="#4468d0" stroke-width="5"/><path d="M992 320l8-10 8 10-8-3Z" fill="#2c60b8" stroke="#2c60b8"/>
    <text transform="translate(1255 252) scale(1.550 1)" class="axis">Z</text><text transform="translate(1002 303) scale(1.350 1)" class="axis blue">Z</text>
  </svg>
</section>

<section class="window gama">
  <header class="gama-head">
    <svg class="logo" viewBox="0 0 43 39"><path d="M.5.500h42v38H.5Z" fill="#e2e4e4" stroke="#222"/><path d="M2.500 2v35M5.500 2v35M9.500 2v35M13.500 2v35M17.500 2v35M28.500 2v35M32.500 2v35M36.500 2v35M39.500 2v35" stroke="#9da0a2"/><path d="M3 28q7 9 11-2V10M13 9q9-4 8 8M23 35q-2-26 14-25" fill="none" stroke="#5c6064" stroke-width="4"/><path d="M24 12v24" stroke="#333" stroke-width="3"/></svg>
    <i class="grip"></i>
    <span class="m">文件</span><span class="m">编辑</span><span class="m">帮助</span>
    <span class="doc">盈建科数字化智能设计软件<tt> Y-GAMA - </tt>新文件<tt>*</tt></span>
    <span class="pin">窗口置顶</span>
    <svg class="winbtns" viewBox="1750 436 143 36"><rect x="1752.500" y="448.500" width="29" height="9" rx="1" fill="#e4ecf8" stroke="#5c6c88"/><path d="M1754 450h26v4h-26Z" fill="#b0c4e8"/><path d="M1752 459.500h30" stroke="#bbb"/><path d="M1808.500 440.500h29v26h-29Z" fill="#f0f4f5" stroke="#1c70b8"/><path d="M1809 441h28v4h-28Z" fill="#40a0e0"/><path d="M1811 447.500h25" stroke="#d4d0cb" stroke-width="2"/><path d="M1864 445l6-5 8 8 8-8 7 6-8 8 8 8-6 7-9-9-8 8-6-6 8-9Z" fill="#d81818" stroke="#611" stroke-width="1.200"/><path d="M1865 446l5-5 8 8 8-8 5 5-6 6q-8 0-13 2Z" fill="#f07480"/></svg>
  </header>
  <div class="gama-body">
    <aside>
      <div class="item first">数据结构</div>
      <div class="item"><svg viewBox="0 0 26 26"><path d="M1 4h20l-2 12H7Z" fill="#d4d4d4" stroke="#aaa"/><path d="M3 8h16M5 12h14M7 5l2 11M12 5v11M17 5l-2 11" stroke="#bbb"/><path d="M24 1l-5 18H7" fill="none" stroke="#888" stroke-width="1.500"/><circle cx="9" cy="21" r="3" fill="#555a60"/><circle cx="19" cy="21" r="3" fill="#555a60"/><circle cx="23.500" cy="2" r="1.800" fill="#e0a030"/></svg>数据容器</div>
      <div class="item"><svg viewBox="0 0 26 26"><path d="M4.500.500h16v19h-16Z" fill="#dce8f6" stroke="#99a8bc"/><path d="M8.500 2v17M12.500 2v17M16.500 2v17M5 4.500h15M5 8.500h15M5 12.500h15" stroke="#a4b4cc"/><rect x="2.500" y="18.500" width="11" height="5" rx="2.500" fill="#ccc" stroke="#777"/><rect x="12.500" y="18.500" width="12" height="5" rx="2.500" fill="#ddd" stroke="#777"/><circle cx="4" cy="21" r="2.800" fill="#50a828"/></svg>数据交互</div>
      <div class="item selected"><svg viewBox="0 0 26 26"><path d="M4 6h18M14 6v13h8" fill="none" stroke="#999" stroke-width="2"/><circle cx="5" cy="6" r="4.300" fill="url(#ball)"/><circle cx="21" cy="6" r="4.300" fill="url(#ball)"/><circle cx="21" cy="18" r="4.300" fill="url(#ball)"/></svg>GH接口</div>
      <div class="item"><svg viewBox="0 0 26 26"><path d="M1.500 2.500h21v16h-21Z" fill="#dce6f4" stroke="#8898b0"/><text x="4" y="15" class="tt">T<tspan font-size="10">T</tspan></text><path d="M9 24l3-5L22 8l3 2-10 12Z" fill="#f0b848" stroke="#885c20"/></svg>文字</div>
      <div class="item"><svg viewBox="0 0 26 26"><path d="M1.500 3.500h19l4 4v14h-23Z" fill="#f0f4f5" stroke="#aaa"/><path d="M4.500 7.500h8v6h-8ZM14.500 5.500h8v7h-8ZM10.500 14.500h8v5h-8Z" fill="#e0f0fa" stroke="#3c94c8"/><path d="M5 9h8M15 7h5M12 17h5" stroke="#1c78b8" stroke-width="1.500"/></svg>PGX卡片</div>
      <div class="item"><svg viewBox="0 0 26 26"><path d="M1 1l6 3h12l6-3v14q-2 10-12 10T1 15Z" fill="#d0bab0" stroke="#86756c"/><path d="M13 4l3 8 6 4q-2 8-9 8t-9-8l6-4Z" fill="#f4ece8"/><circle cx="8" cy="14" r="2.800" fill="#322"/><circle cx="18" cy="14" r="2.800" fill="#322"/><circle cx="8" cy="14" r="1" fill="#e4a030"/><circle cx="18" cy="14" r="1" fill="#e4a030"/><path d="M11 19l2 1 2-1" fill="none" stroke="#933"/></svg>工业厂房</div>
    </aside>
    <svg class="graph" viewBox="1109 481 784 448">
      <defs><linearGradient id="col" x2=".3" y2="1"><stop offset=".2" stop-color="#d8e4f2"/><stop offset=".2" stop-color="#d2d8e8"/><stop offset=".4" stop-color="#d2d8e8"/><stop offset=".4" stop-color="#b0c2e8"/><stop offset=".68" stop-color="#b0c2e8"/><stop offset=".68" stop-color="#94aeee"/></linearGradient></defs>
      <g fill="none" stroke="#777"><path d="M1411 642c25 3 39 29 60 29M1392 711.500l79 1M1392 711.500c32 2 53 42 79 42"/><path d="M1571 681.500h58" stroke-width="1.500"/></g>
      <path d="M1132 630h208l14-14h32l14 14h8v7q-3 5 0 10v7h-276Z" fill="#b0c4e8" stroke="#444" stroke-dasharray="4 1 1 1"/><path d="M1409 637q5 5 0 10" fill="none" stroke="#999" stroke-width="2"/>
      <g stroke="#8c98ac"><path d="M1250 641.500h137"/><path d="M1250.500 636v11M1284.500 636v11M1318.500 636v11M1352.500 636v11M1386.500 636v11M1264.500 639v5M1304.500 639v5M1332.500 639v5M1345.500 639v5M1359.500 639v5M1372.500 639v5"/></g>
      <rect x="1278.500" y="638.500" width="22" height="5.500" rx="1" fill="#f0f4f5" stroke="#aaa"/>
      <path d="M1253.500 685v-12h36l16 13" fill="none" stroke="#c8c8c8"/>
      <path d="M1280.500 650L1277 667.500 1288.500 671.500 1293 668ZM1277.500 667L1285 657 1288 671" fill="#f0f4f5" stroke="#181c20" stroke-width="2"/>
      <path d="M1252 686.500h136v21q4 4 0 8v21h-136v-21q4-4 0-8Z" fill="#f0f4f5" stroke="#aaa" stroke-width="2"/><path d="M1375.500 687v49M1376 698.500h12M1376 723.500h12M1378 694l4-2 4 2M1378 730l4 2 4-2" fill="none" stroke="#aaa"/><path d="M1389 706q5 5 0 11" fill="none" stroke="#aaa" stroke-width="2"/>
      <path d="M1472 651h95v124h-95Z" fill="#f0f4f5"/><path d="M1472 745l23-10v40h-23ZM1524 718l43-20v77h-43Z" fill="#d8e6f2"/><path d="M1524 775v-12l43-20v32Z" fill="#d2d8e8"/><path d="M1495 651h29v124h-29Z" fill="url(#col)"/><path d="M1472 650.500h95v125h-95Z" fill="none" stroke="#aaa" stroke-width="1.800"/>
      <path d="M1630 638h72v87h-72Z" fill="#f0f4f5"/><path d="M1630 707l42-20v38h-42Z" fill="#d8e6f2"/><path d="M1672 638h30v87h-30Z" fill="url(#col)"/><path d="M1630 638h72.500v87H1630Z" fill="none" stroke="#aaa" stroke-width="1.800"/>
      <g fill="#f0f4f5" stroke="#999"><path d="M1471 666q4 5 0 10M1471 708q4 5 0 10M1471 749q4 5 0 10M1629 677q4 5 0 10"/><path d="M1568 677q4 5 0 10M1568 739q4 5 0 10" stroke-width="2"/></g>
      <g class="g15"><text x="1477" y="675">X</text><text x="1477" y="717">Y</text><text x="1477" y="758">Z</text></g>
      <g class="g14"><text x="1536" y="686">向量</text><text x="1536" y="748">长度</text><text x="1634" y="686">向量</text></g>
      <text x="1140" y="648" class="g18">数字滑动条</text><text x="1358" y="630" class="n287">287</text><text x="1259" y="682" class="g8">文字白板</text><text x="1303" y="715" class="n500">500</text>
      <g class="vert"><text x="1510" y="656.500" textLength="100">向量 (XYZ)</text><text x="1687" y="644" textLength="73">发送向量</text></g>
    </svg>
  </div>
</section>
</main>
</body>
</html>
```
FILE: styles.css
```css
* { box-sizing: border-box; }
body { margin: 0; overflow: hidden; font-family: "Open Sans", "Noto Sans CJK SC", sans-serif; font-size: 15px; color: #1c1c1c; }
svg { display: block; }
.defs { position: absolute; }
.desktop { position: relative; width: 1893px; height: 929px; overflow: hidden; background: linear-gradient(90deg, #aaa 0 941px, #c9c9c8 941px 944px, #8a8c8e 944px 947px, #d4d0cb 947px 949px, #666 949px); }
.behind { position: absolute; left: 941px; top: 0; width: 952px; height: 929px; }
.window { position: absolute; background: #f0f4f5; overflow: hidden; }
span, b { white-space: nowrap; }

/* Rhino */
.rhino, .hopper { font-size: 15.4px; }
.rhino { left: 0; top: 0; width: 941px; height: 486px; border-left: 1px solid #a6a6a6; display: flex; flex-direction: column; }
.rhino > * { flex: none; margin-left: -1px; }
.rhino-menu { display: grid; grid-template-columns: 41px 47px 51px 61px 72px 57px 55px 58px 97px 91px 56px 75px 70px 60px; height: 24px; line-height: 26px; margin-top: -10px; color: #6a6a6a; }
.rhino-help { height: 24px; line-height: 26px; color: #6a6a6a; }
.history { height: 43px; line-height: 36px; border-bottom: 1px solid #d4d0cb; }
.prompt { height: 27px; line-height: 21px; border-bottom: 1px solid #d0d8e8; display: flex; justify-content: space-between; color: #000; }
.spin { width: 18px; height: 22px; margin: 1px 3px 0 0; }
.rhino-tabs { position: relative; display: grid; grid-template-columns: 96px 86px 93px 82px 75px 150px 92px 103px 117px 2px 30px; padding-left: 13px; height: 28px; line-height: 35px; }
.rhino-tabs span, .view-tabs span, .gh-tabs span { position: relative; }
.tab-shape { position: absolute; left: 0; top: 0; width: 100%; height: 100%; }
.cut { width: 2px; overflow: hidden; }
.more { width: 30px; height: 24px; margin-top: 3px; }
.rhino-icons { width: 941px; height: 47px; }
.tiny { font: 700 8.5px "Liberation Sans", sans-serif; }
.two { font: 13px "Liberation Sans", sans-serif; }
.rhino-body { display: flex; height: 251px; }
.side-tools { width: 54px; height: 257px; flex: none; }
.viewports { display: grid; grid-template-columns: 446px 435px; grid-template-rows: 127px 120px; gap: 4px; }
.viewport { position: relative; border: 1px solid #d4d0cb; background: #9da3a9; overflow: hidden; }
.viewport svg { width: 100%; height: 100%; }
.vp-label { position: absolute; left: -1px; top: -1px; height: 23px; padding: 0 3px 0 9px; line-height: 20px; background: #d4d0cb; border-radius: 0 0 4px 0; font-weight: 700; font-size: 15px; color: #686868; display: flex; align-items: flex-start; }
.vp-label i { border-left: 1px solid currentColor; height: 18px; margin: 3px 0 0 9px; width: 11px; position: relative; }
.vp-label i::after { content: ""; position: absolute; left: 1px; top: 6px; border: 4.5px solid transparent; border-top-color: currentColor; border-bottom: 0; }
.vp-label.active { background: #869ef2; color: #1c2434; }
.view-tabs { position: relative; display: grid; grid-template-columns: 107px 51px 61px 60px; padding-left: 69px; height: 36px; line-height: 31px; }
.osnaps { display: grid; grid-template-columns: 56px 63px 66px 57px 56px 47px 62px 53px 67px 63px 78px 91px 90px; padding-left: 1px; margin-top: 4px; height: 20px; line-height: 18px; background: linear-gradient(#f0f4f5 8px, #d4dff0 8px); }
.osnaps span { display: flex; gap: 5px; }
.osnaps span::before { content: ""; width: 16px; height: 18px; border: 1.5px solid #555; border-radius: 3px; background: #f0f4f5; }
.osnaps .off::before { border-color: #ccc; width: 14px; }

/* Grasshopper */
.hopper { left: 0; top: 486px; width: 947px; height: 443px; border: 1px solid #a6a6a6; border-bottom: 0; border-radius: 0 10px 0 0; display: flex; flex-direction: column; }
.hopper > * { flex: none; margin-left: -1px; }
.gh-title { display: flex; justify-content: space-between; height: 43px; line-height: 38px; padding: 0 16px 0 1px; color: #939393; }
.gh-title svg { width: 140px; height: 20px; margin-top: 9px; }
.gh-menu { display: grid; grid-template-columns: 46px 48px 57px 72px 83px 555px 80px; padding-left: 7px; height: 27px; line-height: 25px; color: #000; }
.gh-tabs { position: relative; display: grid; grid-template-columns: 67px 59px 51px 66px 60px 75px 51px 90px 89px 75px 90px 60px; padding-left: 1px; height: 30px; line-height: 35px; font-family: "Liberation Mono", monospace; font-size: 13.3px; color: #666; }
.gh-tabs .on { color: #000; line-height: 31px; }
.gh-ribbon { display: flex; gap: 6px; height: 106px; padding-top: 2px; border-bottom: 2px solid #8c8e90; background: linear-gradient(#d4d0cb 30px, #f0f4f5 30px); }
.group { height: 91px; border: 1px solid #8a8d90; border-radius: 4px; overflow: hidden; display: flex; flex-direction: column; }
.group:first-child { border-left: 0; }
.group > svg { height: 72px; width: auto; }
.group footer { height: 18px; position: relative; background: linear-gradient(#222830 12px, #08090a 12px); color: #f0f4f5; text-align: center; font: 10px/13px "Liberation Mono", monospace; }
.group footer svg { position: absolute; right: 2px; top: 2px; width: 12px; height: 12px; }
.group:first-child footer { padding-right: 17px; }
.glyph { font: 700 22px "Liberation Serif", serif; text-anchor: middle; fill: #f0f4f5; }
.gh-tools { display: flex; height: 38px; padding-left: 1px; align-items: center; }
.t-left { width: 72px; height: 37px; }
.t-mid { width: 420px; height: 37px; }
.t-right { width: 272px; height: 37px; }
.zoombox { width: 180px; height: 29px; border: 1px solid #7a7a7a; line-height: 25px; padding: 0 5px 0 4px; display: flex; justify-content: space-between; align-items: center; }
.zoombox svg { width: 10px; height: 6px; }
.gh-canvas { width: 944px; height: 198px; align-self: flex-start; }
.hopper > .gh-canvas { margin-left: 0; }
.node-text { font: 9.5px "Open Sans", "Noto Sans CJK SC", sans-serif; fill: #333; }
.node-text .small { font-size: 8px; }
.cap-text { font: 700 10.5px "Open Sans", "Noto Sans CJK SC", sans-serif; fill: #fff; }
.panel-text { font: 8px "Liberation Mono", monospace; fill: #7c8c30; }

/* CAD */
.cad { left: 949px; top: 0; width: 944px; height: 411px; display: flex; flex-direction: column; }
.cad-ribbon { display: flex; height: 92px; background: linear-gradient(#f0f4f5 10px, #d4d0cb 10px 53px, #adadac 53px); font-size: 12px; }
.panel { background: #f0f4f5; border-right: 1px solid #d0cdca; display: flex; flex-direction: column; flex: none; }
.panel > footer { border-top: 1px solid #d0cdca; margin: 0 1px; text-align: center; line-height: 19px; height: 19px; color: #111; }
.tools { display: flex; height: 73px; padding-top: 2px; }
.tools figure { margin: 0; width: 38px; display: flex; flex-direction: column; align-items: center; color: #444; }
.tools svg { width: 30px; height: 30px; flex: none; }
.tools figcaption { margin-top: 3px; line-height: 20px; white-space: nowrap; }
.drop::after { content: ""; margin-top: 8px; border: 5px solid transparent; border-top-color: #2070e8; border-bottom: 0; }
.p1 { width: 54px; padding-right: 2px; }
.p1 footer, .p1 figcaption { font-size: 12.6px; }
.p1 .tools { padding-left: 8px; padding-top: 2px; }
.p2 { width: 242px; }
.p2 .tools { padding-left: 2px; }
.p2 figure:last-child { width: 46px; }
.p3 { width: 309px; }
.p3 .tools { padding-left: 2px; }
.p4 { width: 81px; }
.p4 .tools { padding-left: 2px; }
.blank { width: 93px; background: none; border-right: 2px solid #f0f4f5; }
.panel.p5 { flex: 1; background: none; border: 0; padding-left: 4px; }
.p5 > svg { width: 150px; height: 48px; margin-left: 4px; }
.level { display: flex; align-items: center; justify-content: space-between; width: 158px; height: 22px; margin-top: 1px; padding: 0 2px; background: #f0f4f5; border: 1px solid #b4bcc8; color: #666; font-size: 12.5px; letter-spacing: -.2px; }
.level svg { width: 8px; height: 5px; }
.cad-view { width: 944px; height: 317px; }
.axis { font: 300 16px "Open Sans", sans-serif; fill: #f0f4f5; }
.axis.blue { fill: #68a8f0; }

/* Y-GAMA */
.gama { left: 949px; top: 423px; width: 944px; height: 506px; border-left: 1px solid #888; border-top: 1px solid #aaa; border-radius: 10px 0 0 0; display: flex; flex-direction: column; }
.gama-head { height: 56px; flex: none; display: grid; grid-template-columns: 43px 13px 13px 51px 51px 78px 451px 96px 143px; padding-left: 4px; white-space: nowrap; }
.logo { width: 43px; height: 39px; margin-top: 10px; }
.grip { justify-self: end; width: 2px; height: 31px; margin-top: 13px; background: repeating-linear-gradient(#aaa 0 2px, transparent 2px 4px); }
.grip + .m { grid-column: 4; }
.m { line-height: 59px; }
.doc { line-height: 50px; font-size: 15.2px; }
.doc tt { font: 14.5px "Liberation Mono", monospace; letter-spacing: -.5px; white-space: pre; }
.pin { line-height: 55px; }
.winbtns { width: 143px; height: 36px; margin-top: 12px; }
.gama-body { display: flex; flex: 1; }
aside { width: 148px; flex: none; margin: -1px 7px 0 3px; padding: 0 1px 0 3px; border: 1px solid #a8a8a8; border-bottom: 0; height: 451px; overflow: hidden; }
.item { height: 64px; margin-bottom: 5px; display: flex; flex-direction: column; align-items: center; padding-left: 31px; line-height: 21px; color: #000; }
.item svg { width: 25px; height: 25px; margin: 13px 0 0; flex: none; }
.item.first { height: 28px; padding-top: 3px; }
.item.selected { background: #d4d0cb; border-left: 7px solid #0a0a0a; padding-left: 24px; font-weight: 700; }
.tt { font: 700 14px "Liberation Serif", serif; fill: #345; }
.graph { width: 785px; height: 449px; border-left: 1px solid #6a6a6a; border-top: 1px solid #6a6a6a; flex: none; }
.g15 { font-size: 14.5px; }
.g14 { font-size: 13.6px; }
.g18 { font-size: 18px; font-weight: 700; }
.g8 { font-size: 8px; }
.n287 { font-size: 13.5px; fill: #555; }
.n500 { font-size: 12.2px; }
.vert { font-size: 17px; font-weight: 700; writing-mode: vertical-rl; }
```
